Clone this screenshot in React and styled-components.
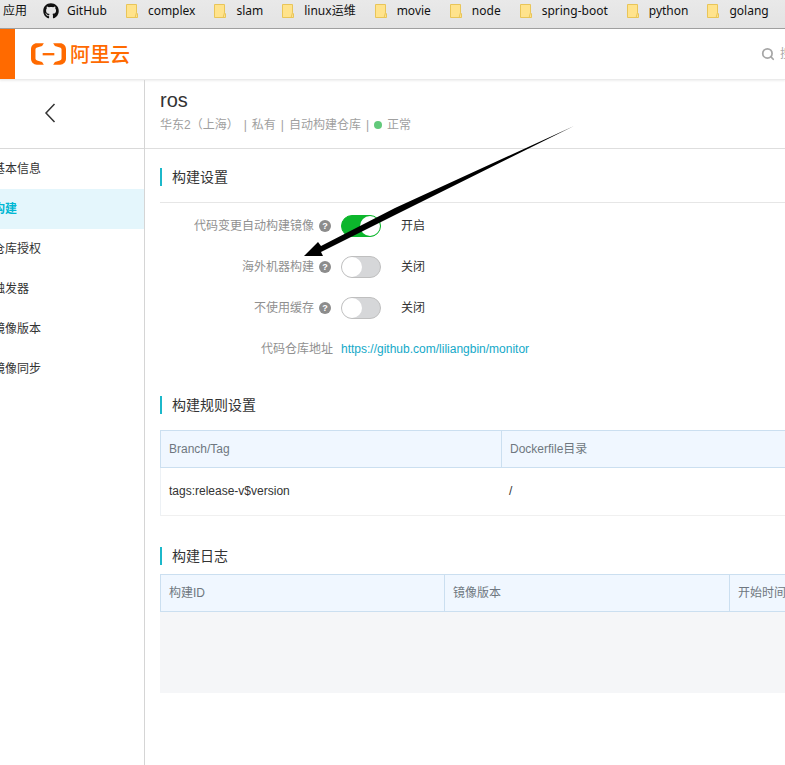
import React from "react";
import styled, { createGlobalStyle } from "styled-components";
import { FaGithub } from "react-icons/fa";
import { Search } from "lucide-react";

const GlobalStyle = createGlobalStyle`
  * { box-sizing: border-box; }
  body {
    margin: 0;
    background: #fff;
    color: #333;
    font: 12px/18px "Liberation Sans", "Noto Sans CJK SC", sans-serif;
    overflow-x: hidden;
  }
  button, input { font: inherit; }
`;

const Page = styled.div`
  position: relative;
  display: flex;
  flex-direction: column;
  min-height: 100vh;
  overflow: hidden;
`;

const BookmarkBar = styled.nav`
  display: flex;
  align-items: center;
  gap: 19px;
  height: 29px;
  padding: 0 0 7px 3px;
  overflow: hidden;
  background: linear-gradient(#e9e9e9, #e3e3e3);
  border-bottom: 1px solid #999;
`;

const Bookmark = styled.a`
  display: flex;
  flex: none;
  align-items: center;
  gap: ${(p) => (p.$tight ? 8 : 10)}px;
  margin-left: ${(p) => (p.$tight ? -3 : 0)}px;
  color: #111;
  font: 12px/20px "Noto Sans", "Noto Sans CJK SC", sans-serif;
  text-decoration: none;
  white-space: nowrap;
`;

const Header = styled.header`
  display: flex;
  align-items: center;
  height: 51px;
  border-bottom: 1px solid #ebebeb;
  box-shadow: 0 1px 2px #eee;
`;

const MenuButton = styled.button`
  align-self: stretch;
  width: 15px;
  padding: 0;
  border: 0;
  background: #ff6a00;
`;

const Brand = styled.a`
  display: flex;
  align-items: center;
  gap: 4px;
  margin-left: 16px;
  color: #ff6a00;
  font: 500 20px/28px "Noto Sans CJK SC", sans-serif;
  text-decoration: none;
`;

const SearchBox = styled.label`
  display: flex;
  align-items: center;
  gap: 5px;
  width: 24px;
  margin-left: auto;
  overflow: hidden;
  color: #a6a6a6;
  svg { flex: none; }
`;

const SearchInput = styled.input`
  flex: none;
  width: 80px;
  padding: 0;
  border: 0;
  outline: 0;
  background: none;
  &::placeholder { color: #aaa; opacity: 1; }
`;

const Body = styled.div`
  display: flex;
  flex: 1;
`;

const Sidebar = styled.aside`
  flex: 0 0 145px;
  border-right: 1px solid #d5d5d5;
`;

const BackButton = styled.button`
  display: flex;
  align-items: center;
  width: 100%;
  height: 69px;
  padding: 0 0 3px 44px;
  border: 0;
  border-bottom: 1px solid #d9d9d9;
  background: none;
`;

const SideLink = styled.a`
  display: block;
  height: 40px;
  overflow: hidden;
  color: ${(p) => (p.$active ? "#00b7d3" : "#333")};
  background: ${(p) => (p.$active ? "#e4f6fc" : "transparent")};
  font-weight: ${(p) => (p.$active ? 700 : 400)};
  line-height: 40px;
  text-decoration: none;
  text-indent: -7px;
  white-space: nowrap;
`;

const Main = styled.main`
  flex: 1;
  min-width: 0;
`;

const RepoHeader = styled.div`
  height: 69px;
  padding: 7px 0 0 15px;
  border-bottom: 1px solid #dedede;
`;

const RepoName = styled.h1`
  margin: 0;
  font-size: 20px;
  font-weight: 400;
  line-height: 26px;
`;

const RepoMeta = styled.div`
  display: flex;
  align-items: center;
  gap: 5px;
  margin-top: 3px;
  color: #a0a0a0;
  white-space: nowrap;
`;

const StatusDot = styled.i`
  width: 8px;
  height: 8px;
  border-radius: 50%;
  background: #62c97b;
`;

const Content = styled.div`
  padding: 19px 0 0 15px;
`;

const SectionTitle = styled.h2`
  margin: 0;
  padding-left: 10px;
  border-left: 2px solid #1cb8ca;
  font-size: 14px;
  font-weight: 400;
  line-height: 18px;
`;

const Settings = styled.div`
  margin: 16px 0 27px;
  padding-top: 2px;
  border-top: 1px solid #e6e6e6;
`;

const SettingRow = styled.div`
  display: grid;
  grid-template-columns: 173px 40px 1fr;
  align-items: center;
  column-gap: 8px;
  height: 41px;
  white-space: nowrap;
`;

const SettingLabel = styled.div`
  display: flex;
  align-items: center;
  justify-content: flex-end;
  gap: 5px;
  padding-right: ${(p) => (p.$help ? 2 : 0)}px;
  color: #909090;
`;

const HelpButton = styled.button`
  width: 12px;
  height: 12px;
  padding: 0;
  border: 0;
  border-radius: 50%;
  background: #8c8c8c;
  color: #fff;
  font-size: 9px;
  font-weight: 700;
  line-height: 12px;
  text-align: center;
`;

const Switch = styled.input`
  appearance: none;
  display: flex;
  align-items: center;
  width: 40px;
  height: 22px;
  margin: 0;
  border: 1px solid #bfbfbf;
  border-radius: 11px;
  background: #d6d7d9;
  &::before {
    content: "";
    width: 20px;
    height: 20px;
    border-radius: 50%;
    background: #fff;
  }
  &:checked {
    justify-content: flex-end;
    border-color: #0cb62c;
    background: #0cb62c;
  }
`;

const SwitchState = styled.span`
  padding-left: 12px;
`;

const RepoLink = styled.a`
  color: #14a9c8;
  text-decoration: none;
`;

const Table = styled.table`
  width: 100%;
  margin: ${(p) => (p.$compact ? 9 : 16)}px 0 ${(p) => (p.$compact ? 0 : 31)}px;
  border-collapse: separate;
  border-spacing: 0;
  table-layout: fixed;
`;

const HeadCell = styled.th`
  width: ${(p) => p.$width || "auto"};
  height: 38px;
  padding: 0 0 0 8px;
  border: solid #cbdff0;
  border-width: 1px 0 1px 1px;
  background: #f0f7ff;
  color: #6f7780;
  font-weight: 400;
  text-align: left;
  white-space: nowrap;
`;

const Cell = styled.td`
  height: 48px;
  padding: 0 8px 2px;
  border-bottom: 1px solid #f0f0f0;
  &:first-child { border-left: 1px solid #edf1f5; }
`;

const EmptyCell = styled.td`
  height: 81px;
  background: #f5f6f8;
`;

const Annotation = styled.svg`
  position: absolute;
  top: 126px;
  left: 304px;
  pointer-events: none;
`;

const FolderIcon = () => (
  <svg width="12" height="14" viewBox="0 0 12 14" aria-hidden="true">
    <path d="M.5.5h10v8.2l1 1.2v3.6H.5z" fill="#ffe38c" stroke="#e9c558" />
    <path d="M10.5 8.5l-1.4 5" fill="none" stroke="#e9c558" />
  </svg>
);

const BrandMark = () => (
  <svg width="35" height="22" viewBox="0 0 36 22" fill="#ff6a00" aria-hidden="true">
    <path d="M13.2 0H6C2.6 0 0 2.6 0 6v10c0 3.4 2.6 6 6 6h7.2l-1.8-2.7-5.1-1.5a2.2 2.2 0 0 1-1.7-2.1V6.3c0-1 .7-1.8 1.7-2.1l5.1-1.500z" />
    <path d="M22.8 0H30c3.4 0 6 2.6 6 6v10c0 3.4-2.6 6-6 6h-7.2l1.8-2.7 5.1-1.5a2.2 2.2 0 0 0 1.7-2.1V6.3c0-1-.7-1.8-1.7-2.1l-5.1-1.500z" />
    <path d="M12 10h12v2.400H12z" />
  </svg>
);

const folders = ["complex", "slam", "linux运维", "movie", "node", "spring-boot", "python", "golang"];
const menu = ["基本信息", "构建", "仓库授权", "触发器", "镜像版本", "镜像同步"];
const switches = [
  { id: "auto-build", label: "代码变更自动构建镜像", on: true },
  { id: "overseas", label: "海外机器构建", on: false },
  { id: "no-cache", label: "不使用缓存", on: false },
];

function SettingSwitch({ id, label, on }) {
  const [checked, setChecked] = React.useState(on);
  return (
    <SettingRow>
      <SettingLabel $help>
        <label htmlFor={id}>{label}</label>
        <HelpButton type="button">?</HelpButton>
      </SettingLabel>
      <Switch id={id} type="checkbox" role="switch" checked={checked} onChange={(e) => setChecked(e.target.checked)} />
      <SwitchState>{checked ? "开启" : "关闭"}</SwitchState>
    </SettingRow>
  );
}

export default function App() {
  return (
    <Page>
      <GlobalStyle />
      <BookmarkBar>
        <Bookmark href="#apps">应用</Bookmark>
        <Bookmark href="#github" $tight>
          <FaGithub size={16} />
          GitHub
        </Bookmark>
        {folders.map((name) => (
          <Bookmark key={name} href={`#${name}`}>
            <FolderIcon />
            {name}
          </Bookmark>
        ))}
      </BookmarkBar>
      <Header>
        <MenuButton type="button" aria-label="菜单" />
        <Brand href="#home">
          <BrandMark />
          阿里云
        </Brand>
        <SearchBox>
          <Search size={14} strokeWidth={3} />
          <SearchInput type="text" placeholder="搜索" />
        </SearchBox>
      </Header>
      <Body>
        <Sidebar>
          <BackButton type="button" aria-label="返回">
            <svg width="12" height="20" viewBox="0 0 12 20" fill="none" stroke="#333" strokeWidth="1.5">
              <path d="M10.5 1L2 10l8.5 9" />
            </svg>
          </BackButton>
          <nav>
            {menu.map((name) => (
              <SideLink key={name} href={`#${name}`} $active={name === "构建"}>
                {name}
              </SideLink>
            ))}
          </nav>
        </Sidebar>
        <Main>
          <RepoHeader>
            <RepoName>ros</RepoName>
            <RepoMeta>
              <span>华东2（上海）</span>
              <span>|</span>
              <span>私有</span>
              <span>|</span>
              <span>自动构建仓库</span>
              <span>|</span>
              <StatusDot />
              <span>正常</span>
            </RepoMeta>
          </RepoHeader>
          <Content>
            <SectionTitle>构建设置</SectionTitle>
            <Settings>
              {switches.map((s) => (
                <SettingSwitch key={s.id} {...s} />
              ))}
              <SettingRow>
                <SettingLabel>代码仓库地址</SettingLabel>
                <RepoLink href="https://github.com/liliangbin/monitor">https://github.com/liliangbin/monitor</RepoLink>
              </SettingRow>
            </Settings>
            <SectionTitle>构建规则设置</SectionTitle>
            <Table>
              <thead>
                <tr>
                  <HeadCell $width="341px">Branch/Tag</HeadCell>
                  <HeadCell>Dockerfile目录</HeadCell>
                </tr>
              </thead>
              <tbody>
                <tr>
                  <Cell>tags:release-v$version</Cell>
                  <Cell>/</Cell>
                </tr>
              </tbody>
            </Table>
            <SectionTitle>构建日志</SectionTitle>
            <Table $compact>
              <thead>
                <tr>
                  <HeadCell $width="284px">构建ID</HeadCell>
                  <HeadCell $width="285px">镜像版本</HeadCell>
                  <HeadCell>开始时间</HeadCell>
                </tr>
              </thead>
              <tbody>
                <tr>
                  <EmptyCell colSpan={3} />
                </tr>
              </tbody>
            </Table>
          </Content>
        </Main>
      </Body>
      <Annotation width="271" height="131" viewBox="0 0 271 131" aria-hidden="true">
        <path d="M0 130L14 116l3 4L91 82 270 0 91 89 17 126l2 4z" />
      </Annotation>
    </Page>
  );
}
